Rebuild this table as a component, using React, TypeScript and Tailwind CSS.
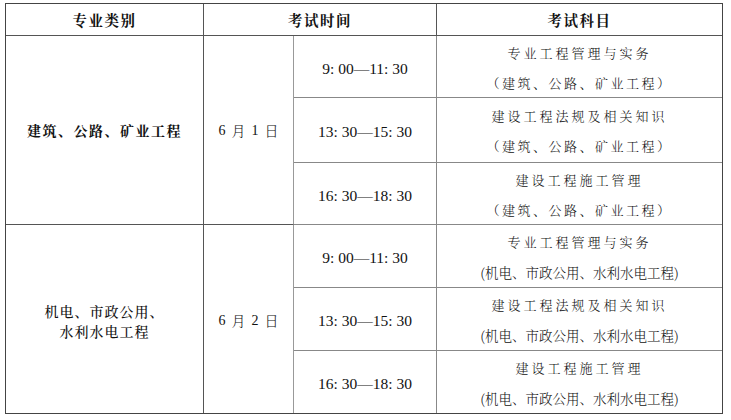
const cjk = "font-['Noto_Serif_CJK_SC','Noto_Sans_CJK_SC',serif]";
const num = "font-['Liberation_Serif','Noto_Sans_CJK_SC',serif]";

interface Session {
  time: string;
  subject: string;
  scope: string;
}

interface Group {
  category: string[];
  month: string;
  day: string;
  scopeWide: boolean;
  sessions: Session[];
}

const groups: Group[] = [
  {
    category: ["建筑、公路、矿业工程"],
    month: "6",
    day: "1",
    scopeWide: true,
    sessions: [
      { time: "9: 00—11: 30", subject: "专业工程管理与实务", scope: "（建筑、公路、矿业工程）" },
      { time: "13: 30—15: 30", subject: "建设工程法规及相关知识", scope: "（建筑、公路、矿业工程）" },
      { time: "16: 30—18: 30", subject: "建设工程施工管理", scope: "（建筑、公路、矿业工程）" },
    ],
  },
  {
    category: ["机电、市政公用、", "水利水电工程"],
    month: "6",
    day: "2",
    scopeWide: false,
    sessions: [
      { time: "9: 00—11: 30", subject: "专业工程管理与实务", scope: "(机电、市政公用、水利水电工程)" },
      { time: "13: 30—15: 30", subject: "建设工程法规及相关知识", scope: "(机电、市政公用、水利水电工程)" },
      { time: "16: 30—18: 30", subject: "建设工程施工管理", scope: "(机电、市政公用、水利水电工程)" },
    ],
  },
];

export default function App() {
  return (
    <div className="w-[731px] h-[420px] bg-white pl-[5px] pt-[3px] text-[#111]">
      <div className="grid w-[718px] grid-cols-[198px_90px_143px_285px] grid-rows-[32px_62px_65px_62px_63px_63px_62px] border border-[#444]">
        {/* header */}
        <div className={`${cjk} flex items-center justify-center border-r border-b border-[#555] text-[14.5px] font-bold tracking-[1.5px]`}>
          专业类别
        </div>
        <div className={`${cjk} col-span-2 flex items-center justify-center border-r border-b border-[#555] text-[14.5px] font-bold tracking-[1.5px]`}>
          考试时间
        </div>
        <div className={`${cjk} flex items-center justify-center border-b border-[#555] text-[14.5px] font-bold tracking-[1.5px]`}>
          考试科目
        </div>

        {groups.map((g, gi) => {
          const last = gi === groups.length - 1;
          return [
            <div
              key={`cat-${gi}`}
              className={`${cjk} row-span-3 flex flex-col items-center justify-center border-r border-[#555] text-[14px] ${
                last ? "pt-1 leading-5 font-medium tracking-[1px]" : "border-b font-bold tracking-[1.5px]"
              }`}
            >
              {g.category.map((line) => (
                <span key={line}>{line}</span>
              ))}
            </div>,
            <div
              key={`date-${gi}`}
              className={`row-span-3 flex items-center justify-center gap-[6px] border-r border-[#999] text-[14px] ${
                last ? "pt-[2px]" : "border-b border-b-[#555]"
              }`}
            >
              <span className={num}>{g.month}</span>
              <span className={`${cjk} font-light`}>月</span>
              <span className={num}>{g.day}</span>
              <span className={`${cjk} font-light`}>日</span>
            </div>,
            ...g.sessions.flatMap((s, si) => {
              const bottom = !(last && si === g.sessions.length - 1);
              return [
                <div
                  key={`t-${gi}-${si}`}
                  className={`${num} flex items-center justify-center border-r border-[#888] pt-1 text-[15.5px] ${
                    bottom ? "border-b" : ""
                  }`}
                >
                  {s.time}
                </div>,
                <div
                  key={`s-${gi}-${si}`}
                  className={`${cjk} flex flex-col items-center justify-center border-[#888] pt-[2px] leading-[30px] font-light ${
                    bottom ? "border-b" : ""
                  }`}
                >
                  <span className="text-[13px] tracking-[3px]">{s.subject}</span>
                  <span className={g.scopeWide ? "text-[13px] tracking-[2.5px]" : "text-[13.5px]"}>{s.scope}</span>
                </div>,
              ];
            }),
          ];
        })}
      </div>
    </div>
  );
}
